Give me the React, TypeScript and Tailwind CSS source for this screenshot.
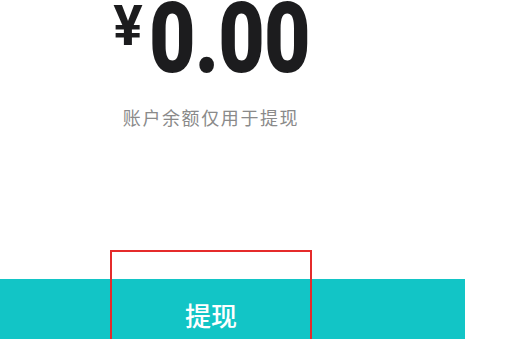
export default function App() {
  return (
    <div className="relative h-[339px] w-[520px] overflow-hidden bg-white font-['Roboto','Noto_Sans_CJK_SC',sans-serif]">
      <div className="flex w-[422px] flex-col items-center">
        <div className="mt-[4px] flex h-[82px] items-start text-[#1c1c1e]">
          <span className="mt-[2px] mr-[6px] text-[55px] font-bold leading-[40px]">¥</span>
          <div className="w-[160px]">
            <span className="inline-block origin-left scale-x-[0.82] whitespace-nowrap text-[98px] font-black leading-[70px] tracking-[-1px]">0.00</span>
          </div>
        </div>
        <p className="mt-[24px] text-[18px] leading-none tracking-[1.6px] text-[#8a8a8a]">
          账户余额仅用于提现
        </p>
      </div>
      <button className="mt-[151px] flex h-[60px] w-[465px] items-start bg-[#12c5c6] pr-[43px] pt-[25px]">
        <span className="w-full text-center text-[26px] font-medium leading-none text-white">提现</span>
      </button>
      <div className="pointer-events-none absolute left-[110px] top-[250px] h-[100px] w-[202px] border-2 border-[#e52b2b]" />
    </div>
  )
}
